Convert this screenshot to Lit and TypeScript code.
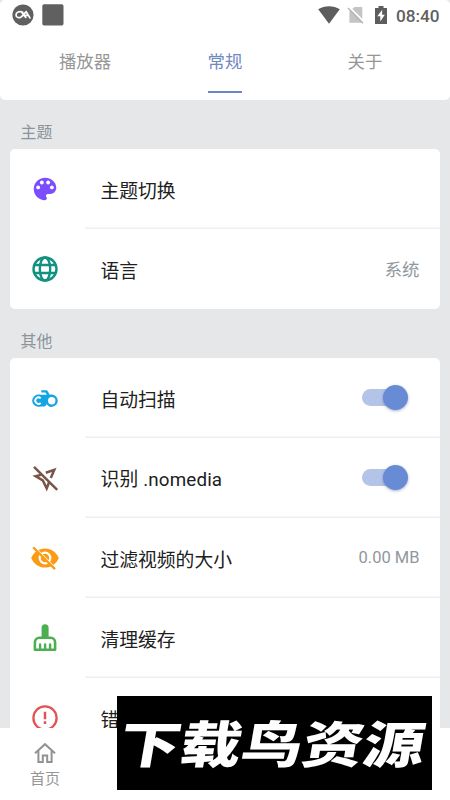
import { LitElement, html, svg, css, nothing, type TemplateResult, type SVGTemplateResult } from "lit";
import { customElement, property, state } from "lit/decorators.js";
import { classMap } from "lit/directives/class-map.js";

const ICONS: Record<string, SVGTemplateResult> = {
  palette: svg`<g transform="translate(1.5 1.5) scale(1.125)"><path fill="#7c4dff" d="M12 2C17.522 2 22 5.978 22 10.889c0 3.067-2.489 5.555-5.556 5.555h-1.966c-.922 0-1.667.745-1.667 1.667 0 .422.167.811.422 1.1.267.3.434.689.434 1.122C13.667 21.256 12.9 22 12 22 6.478 22 2 17.522 2 12S6.478 2 12 2Z"/>
    <g fill="#fff"><circle cx="5.9" cy="10.6" r="1.7"/><circle cx="9.2" cy="6.2" r="1.7"/><circle cx="14.8" cy="6.2" r="1.7"/><circle cx="18.1" cy="10.6" r="1.7"/></g></g>`,
  globe: svg`<g fill="none" stroke="#12917f" stroke-width="2.4"><circle cx="15" cy="15" r="11.5"/><ellipse cx="15" cy="15" rx="5.2" ry="11.5"/><path d="M4.2 11h21.6M4.2 19h21.6"/></g>`,
  bike: svg`<path fill="#16a5e3" d="M11.3 7.2h4.6c1 0 1.6.4 2 1.2l1.8 3.3h2.5v12.2h-2L16.6 21c-.6 1.900-1.700 2.500-3.200 2.500H8.200V11.700h8.600L15.400 9.400h-4.100Z"/>
    <circle cx="8.300" cy="17.700" r="6.100" fill="#16a5e3"/><circle cx="21.700" cy="17.700" r="6.100" fill="#16a5e3"/>
    <circle cx="21.700" cy="17.700" r="3.700" fill="#fff"/><path d="M10.700 15.400a3.200 3.200 0 1 0 0 4.600M8.600 17.700" fill="none" stroke="#fff" stroke-width="1.800"/>`,
  arrowOff: svg`<g fill="none" stroke="#795548" stroke-width="2.5"><path d="M4 3.800 27.200 26.800"/><path d="M15.800 9.800 24.300 6.800 20.800 15M11.600 11.600 5.600 13.200l7.200 4.200 3.900 8 2.400-6.200"/></g>`,
  eyeOff: svg`<path fill="#fb9b14" d="M1.2 15C3.6 9.2 8.7 5.4 15 5.4S26.4 9.2 28.8 15C26.4 20.8 21.3 24.6 15 24.6S3.6 20.8 1.2 15Z"/>
    <circle cx="15" cy="15" r="5.300" fill="none" stroke="#fff" stroke-width="2.200"/><path d="m2.500 6.500 21.800 21.800" stroke="#fff" stroke-width="2.600" transform="translate(1.700 -1.900)"/><path d="M3.100 4.200 25 26.100" stroke="#fb9b14" stroke-width="2.300"/>`,
  brush: svg`<path fill="#4caf50" d="M11.6 4.7a3.5 3.5 0 0 1 7 0V14h-7Z"/><path fill="none" stroke="#4caf50" stroke-width="2.6" stroke-linejoin="round" d="M9.5 14.8h11c2.8 0 4.6 2 4.6 4.7v7.2H4.9v-7.2c0-2.7 1.8-4.7 4.6-4.7Z"/><path fill="none" stroke="#4caf50" stroke-width="2.4" stroke-linecap="round" d="M10.1 26v-4.6M15.1 26v-4.6M20.1 26v-4.6"/>`,
  alert: svg`<circle cx="15" cy="15" r="11.6" fill="none" stroke="#e35353" stroke-width="2.3"/><path stroke="#e35353" stroke-width="2.5" d="M15 8.8v7.4M15 18.3v2.6"/>`,
};

@customElement("toggle-switch")
export class ToggleSwitch extends LitElement {
  @property({ type: Boolean, reflect: true }) on = false;

  static styles = css`
    :host { display: flex; align-items: center; width: 46px; height: 26px; }
    .track { display: flex; align-items: center; width: 42px; height: 17.5px; border-radius: 9px; background: #b4c4e9; }
    .thumb { flex: none; width: 25px; height: 25px; border-radius: 50%; background: #688bd5; box-shadow: 0 1px 3px rgba(60, 80, 120, 0.45); }
    :host([on]) .thumb { margin-left: 20.5px; }
  `;

  render() {
    return html`<div class="track" @click=${() => (this.on = !this.on)}><div class="thumb"></div></div>`;
  }
}

@customElement("setting-row")
export class SettingRow extends LitElement {
  @property() icon = "";
  @property() label = "";
  @property() value = "";
  @property({ type: Boolean }) toggle = false;

  static styles = css`
    :host { display: flex; height: 80px; box-sizing: border-box; }
    .icon { flex: none; width: 75px; display: flex; align-items: center; padding-left: 20px; box-sizing: border-box; }
    .icon svg { display: block; width: 30px; height: 30px; }
    .body { flex: 1; display: flex; align-items: center; justify-content: space-between; padding: 0 20.5px 0 15.5px; box-shadow: inset 0 -1.5px #efeff1; }
    :host(:last-of-type) .body { box-shadow: none; }
    .label { font-size: 18.8px; line-height: 26px; color: #202020; padding-top: 6px; white-space: pre; }
    .label.latin { padding-top: 4px; letter-spacing: 0.15px; }
    .value { font-size: 17.4px; line-height: 24px; color: #90979e; padding-top: 2px; }
    .value.num { font-size: 16.5px; padding-top: 0; }
    toggle-switch { margin-right: 11.5px; }
  `;

  render() {
    return html`
      <div class="icon"><svg viewBox="0 0 30 30">${ICONS[this.icon]}</svg></div>
      <div class="body">
        <span class=${classMap({ label: true, latin: /[a-z]/.test(this.label) })}>${this.label}</span>
        ${this.toggle ? html`<toggle-switch on></toggle-switch>` : nothing}
        ${this.value ? html`<span class=${classMap({ value: true, num: /\d/.test(this.value) })}>${this.value}</span>` : nothing}
      </div>`;
  }
}

@customElement("app-root")
export class AppRoot extends LitElement {
  @state() private active = 1;

  private tabs = ["播放器", "常规", "关于"];

  static styles = css`
    :host { display: flex; flex-direction: column; position: relative; width: 450px; height: 800px; overflow: hidden; background: #e6e7e9; font-family: Roboto, "Noto Sans CJK SC", sans-serif; }
    .header { flex: none; height: 100px; background: #fff; border-radius: 5px; display: flex; flex-direction: column; }
    .status { height: 30px; display: flex; align-items: center; padding: 0 10.5px 0 11.5px; box-sizing: border-box; }
    .status svg { display: block; flex: none; }
    .app-mark { margin-right: 8.5px; }
    .spacer { flex: 1; }
    .sim { margin-left: 7px; }
    .battery { margin: 0 8.5px 0 10px; }
    .clock { font-size: 17.2px; font-weight: 500; color: #606060; line-height: 20px; padding-top: 1px; }
    .tabs { flex: 1; display: grid; grid-template-columns: repeat(3, 140px); justify-content: center; }
    .tab { display: flex; justify-content: center; }
    .tab span { height: 62.5px; box-sizing: border-box; padding-top: 18.5px; font-size: 17.4px; line-height: 26px; color: #969696; border-bottom: 2.5px solid transparent; }
    .tab.active span { color: #7188bf; border-color: #6c87c4; }
    .content { flex: none; height: 627.5px; overflow: hidden; padding: 0 10px; box-sizing: border-box; }
    .heading { height: 49px; box-sizing: border-box; padding: 21px 0 0 10.5px; font-size: 15.9px; line-height: 24px; color: #8b939b; }
    .card { display: flex; flex-direction: column; background: #fff; border-radius: 5px; }
    .theme { height: 159.5px; }
    .nav { flex: 1; background: #fff; display: flex; }
    .nav-item { width: 90px; display: flex; flex-direction: column; align-items: center; color: #969696; font-size: 15px; line-height: 20px; }
    .nav-item svg { display: block; margin: 14px 0 5.5px; }
    .banner { position: absolute; left: 117px; top: 696px; width: 315px; height: 94px; background: #000; display: flex; align-items: center; justify-content: center; }
    .banner span { font-family: "Noto Sans CJK SC", sans-serif; font-weight: 900; font-size: 50px; line-height: 60px; color: #fff; white-space: nowrap; transform: translate(-2px, -2px) scaleX(1.22) skewX(-8deg); }
  `;

  private status(): TemplateResult {
    return html`<div class="status">
      <svg class="app-mark" width="22" height="22" viewBox="0 0 22 22"><circle cx="11" cy="11" r="10.6" fill="#606060"/><path d="M10.8 8.2C7.4 6.9 4 8.1 4 10.9c0 2.7 3.5 3.7 5.6 1.7l4.6-4.9 3.7 6.2M10 8.6l3.8 4.8M12 11.3h4.5" fill="none" stroke="#fff" stroke-width="1.7" stroke-linecap="round" stroke-linejoin="round"/></svg>
      <svg width="22" height="22" viewBox="0 0 22 22"><rect x=".3" y=".3" width="21.2" height="21.2" rx="1.7" fill="#606060"/></svg>
      <div class="spacer"></div>
      <svg width="22" height="20" viewBox="0 0 22 20"><path d="M.2 4.2C6.5.2 15.5.2 21.8 4.2L11 18.8Z" fill="#5d5d5d"/></svg>
      <svg class="sim" width="18" height="20" viewBox="0 0 18 20"><path d="M7.5 2h7.8v15.8H2.4V6.6Z" fill="#c4c4c4"/><path d="m2.4 2.4 15 15" stroke="#fff" stroke-width="2"/><path d="m1 3 15 15.3" stroke="#b5b5b5" stroke-width="1.5"/></svg>
      <svg class="battery" width="12" height="20" viewBox="0 0 12 20"><path d="M0 3h3.5V1h5v2H12v16H0Z" fill="#5d5d5d"/><path d="M7.2 4.8 2.3 11.3h3V16.5l4.5-6.8H7.1Z" fill="#fff"/></svg>
      <span class="clock">08:40</span>
    </div>`;
  }

  render() {
    return html`
      <div class="header">
        ${this.status()}
        <div class="tabs">
          ${this.tabs.map((t, i) => html`<div class=${classMap({ tab: true, active: i === this.active })} @click=${() => (this.active = i)}><span>${t}</span></div>`)}
        </div>
      </div>
      <div class="content">
        <div class="heading">主题</div>
        <div class="card theme">
          <setting-row icon="palette" label="主题切换"></setting-row>
          <setting-row icon="globe" label="语言" value="系统"></setting-row>
        </div>
        <div class="heading">其他</div>
        <div class="card">
          <setting-row icon="bike" label="自动扫描" toggle></setting-row>
          <setting-row icon="arrowOff" label="识别 .nomedia" toggle></setting-row>
          <setting-row icon="eyeOff" label="过滤视频的大小" value="0.00 MB"></setting-row>
          <setting-row icon="brush" label="清理缓存"></setting-row>
          <setting-row icon="alert" label="错"></setting-row>
        </div>
      </div>
      <div class="nav">
        <div class="nav-item">
          <svg width="22" height="22" viewBox="0 0 22 22"><path d="M1 11.2 11 2.2l10 9M4.4 9v11h4.4v-6.6h4.4V20h4.4V9" fill="none" stroke="#929292" stroke-width="2"/></svg>
          <span>首页</span>
        </div>
      </div>
      <div class="banner"><span>下载鸟资源</span></div>`;
  }
}
